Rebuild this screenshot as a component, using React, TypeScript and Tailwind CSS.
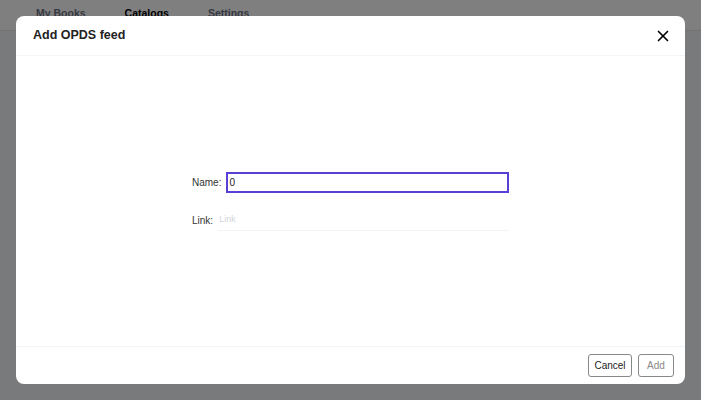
import { X } from "lucide-react";

const tabs = ["My Books", "Catalogs", "Settings"];

const App = () => {
  return (
    <div
      className="relative h-[400px] w-[701px] overflow-hidden bg-gray-100"
      style={{ fontFamily: '"Liberation Sans", Arial, sans-serif' }}
    >
      {/* page behind the dialog */}
      <div className="flex h-[31px] items-end gap-[39px] border-b border-gray-200 bg-white pl-[36px]">
        {tabs.map((tab) => (
          <div
            key={tab}
            className={`pb-[8px] text-[10.5px] font-bold ${
              tab === "Catalogs" ? "text-black" : "text-gray-500"
            }`}
          >
            {tab}
          </div>
        ))}
      </div>

      {/* overlay */}
      <div className="absolute inset-0 flex bg-black/50 p-4">
        <div className="flex flex-1 flex-col rounded-[8px] bg-white">
          <div className="flex h-[40px] items-center justify-between border-b border-gray-100 pl-[17px] pr-[13px]">
            <div className="text-[12.5px] font-bold text-[#222]">Add OPDS feed</div>
            <X size={18} strokeWidth={2.2} className="text-black" />
          </div>

          <div className="flex flex-1 items-center justify-center">
            <div className="flex w-[317px] flex-col gap-[17px]">
              <div className="flex items-center gap-[5px]">
                <span className="text-[10px] text-[#333]">Name:</span>
                <div className="flex h-[21px] flex-1 items-center border-2 border-[#5a3fd6] pl-px text-[10px] text-[#222]">
                  0
                </div>
              </div>
              <div className="flex items-center gap-[5px]">
                <span className="text-[10px] text-[#333]">Link:</span>
                <div className="flex h-[21px] flex-1 items-center border-b border-gray-100 pl-px text-[9px] text-gray-300">
                  Link
                </div>
              </div>
            </div>
          </div>

          <div className="flex h-[38px] items-center justify-end gap-[6px] border-t border-gray-100 pr-[11px]">
            <button className="h-[23px] w-[44px] rounded-[3px] border border-[#888] text-[10px] text-[#222]">
              Cancel
            </button>
            <button className="h-[23px] w-[36px] rounded-[3px] border border-[#888] text-[10px] text-[#888]">
              Add
            </button>
          </div>
        </div>
      </div>
    </div>
  );
};

export default App;
